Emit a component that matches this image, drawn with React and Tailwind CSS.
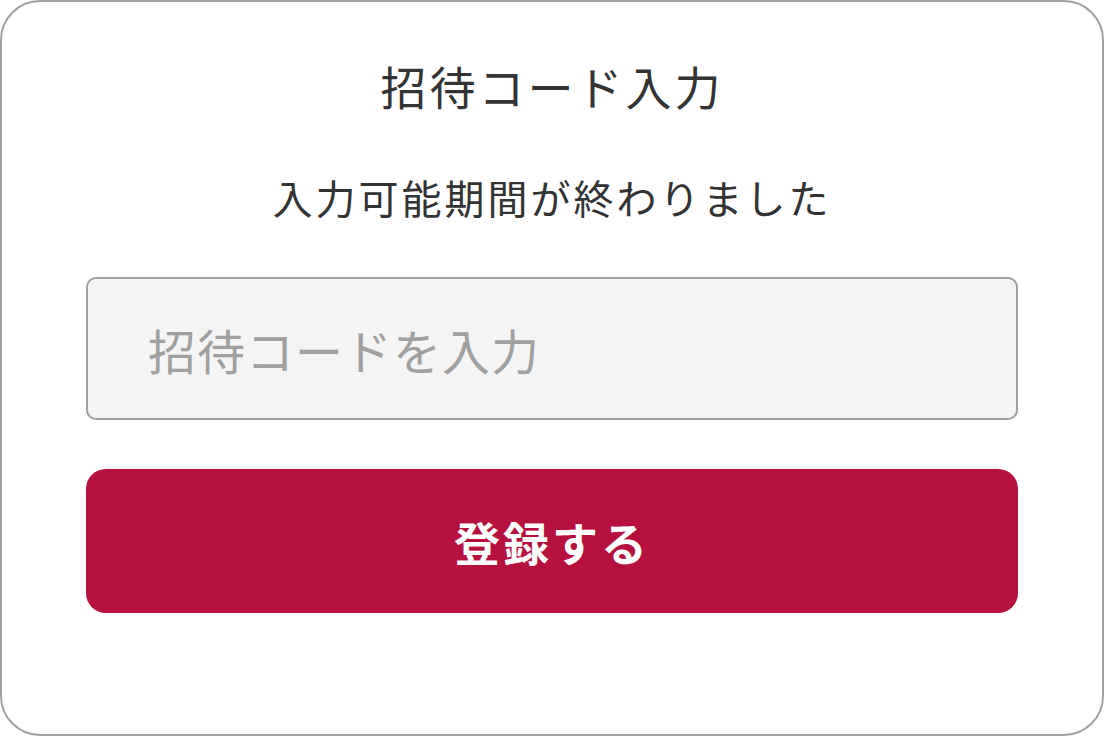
export default function App() {
  return (
    <div className="h-[736px] w-[1104px] bg-white" style={{ fontFamily: '"Noto Sans CJK JP", "Noto Sans", sans-serif' }}>
      <div className="flex h-full w-full flex-col items-center rounded-[40px] border-2 border-[#a0a0a0] px-[84px]">
        <h1 className="mt-[51px] text-[46px] leading-[64px] tracking-[3px] text-[#333333]">招待コード入力</h1>
        <p className="mt-[53px] text-[40px] leading-[54px] tracking-[3px] text-[#333333]">入力可能期間が終わりました</p>
        <input
          type="text"
          placeholder="招待コードを入力"
          className="mt-[53px] h-[143px] w-full rounded-[10px] border-2 border-[#a0a0a0] bg-[#f4f4f4] px-[60px] text-[48px] tracking-[1px] text-[#333333] outline-none placeholder:text-[#a0a0a0]"
        />
        <button
          type="button"
          className="mt-[49px] h-[144px] w-full rounded-[20px] bg-[#b5103e] text-[46px] font-bold tracking-[3px] text-white"
        >
          登録する
        </button>
      </div>
    </div>
  )
}
